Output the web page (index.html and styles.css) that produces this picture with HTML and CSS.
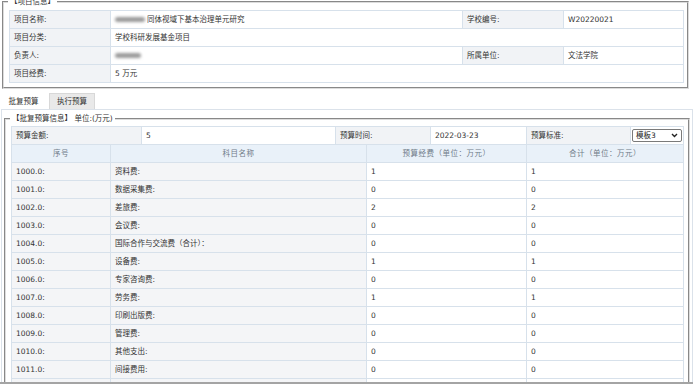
FILE: index.html
```html
<!DOCTYPE html>
<html lang="zh-CN">
<head>
    <meta charset="UTF-8">
    <meta name="viewport" content="width=device-width, initial-scale=1.0">
    <title>项目预算</title>
    <link rel="stylesheet" href="styles.css">
</head>
<body>
    <div class="page">
        <fieldset class="box info">
            <legend>【项目信息】</legend>
            <table class="grid">
                <colgroup>
                    <col style="width:101px">
                    <col style="width:352px">
                    <col style="width:101px">
                    <col style="width:120px">
                </colgroup>
                <tr>
                    <td class="lbl">项目名称:</td>
                    <td><span class="blur wide"></span>同体视域下基本治理单元研究</td>
                    <td class="lbl">学校编号:</td>
                    <td>W20220021</td>
                </tr>
                <tr>
                    <td class="lbl">项目分类:</td>
                    <td colspan="3">学校科研发展基金项目</td>
                </tr>
                <tr>
                    <td class="lbl">负责人:</td>
                    <td><span class="blur"></span></td>
                    <td class="lbl">所属单位:</td>
                    <td>文法学院</td>
                </tr>
                <tr>
                    <td class="lbl">项目经费:</td>
                    <td colspan="3">5 万元</td>
                </tr>
            </table>
        </fieldset>

        <div class="tabs">
            <div class="tab active">批复预算</div>
            <div class="tab">执行预算</div>
        </div>

        <div class="panel">
            <fieldset class="box budget">
                <legend>【批复预算信息】 单位:(万元)</legend>
                <table class="grid">
                    <colgroup>
                        <col style="width:99px">
                        <col style="width:31px">
                        <col style="width:194px">
                        <col style="width:31px">
                        <col style="width:64px">
                        <col style="width:96px">
                        <col style="width:104px">
                        <col style="width:53px">
                    </colgroup>
                    <tr>
                        <td class="lbl" colspan="2">预算金额:</td>
                        <td>5</td>
                        <td class="lbl" colspan="2">预算时间:</td>
                        <td>2022-03-23</td>
                        <td class="lbl">预算标准:</td>
                        <td class="pick">
                            <div class="select">
                                <span>模板3</span>
                                <svg width="7" height="5" viewBox="0 0 7 5"><polyline points="1,1 3.5,3.5 6,1" fill="none" stroke="#222" stroke-width="1.4"/></svg>
                            </div>
                        </td>
                    </tr>
                    <tr class="head">
                        <td>序号</td>
                        <td colspan="3">科目名称</td>
                        <td colspan="2">预算经费（单位：万元）</td>
                        <td colspan="2">合计（单位：万元）</td>
                    </tr>
                    <tr><td class="key">1000.0:</td><td class="key" colspan="3">资料费:</td><td colspan="2">1</td><td colspan="2">1</td></tr>
                    <tr><td class="key">1001.0:</td><td class="key" colspan="3">数据采集费:</td><td colspan="2">0</td><td colspan="2">0</td></tr>
                    <tr><td class="key">1002.0:</td><td class="key" colspan="3">差旅费:</td><td colspan="2">2</td><td colspan="2">2</td></tr>
                    <tr><td class="key">1003.0:</td><td class="key" colspan="3">会议费:</td><td colspan="2">0</td><td colspan="2">0</td></tr>
                    <tr><td class="key">1004.0:</td><td class="key" colspan="3">国际合作与交流费（合计）：</td><td colspan="2">0</td><td colspan="2">0</td></tr>
                    <tr><td class="key">1005.0:</td><td class="key" colspan="3">设备费:</td><td colspan="2">1</td><td colspan="2">1</td></tr>
                    <tr><td class="key">1006.0:</td><td class="key" colspan="3">专家咨询费:</td><td colspan="2">0</td><td colspan="2">0</td></tr>
                    <tr><td class="key">1007.0:</td><td class="key" colspan="3">劳务费:</td><td colspan="2">1</td><td colspan="2">1</td></tr>
                    <tr><td class="key">1008.0:</td><td class="key" colspan="3">印刷出版费:</td><td colspan="2">0</td><td colspan="2">0</td></tr>
                    <tr><td class="key">1009.0:</td><td class="key" colspan="3">管理费:</td><td colspan="2">0</td><td colspan="2">0</td></tr>
                    <tr><td class="key">1010.0:</td><td class="key" colspan="3">其他支出:</td><td colspan="2">0</td><td colspan="2">0</td></tr>
                    <tr><td class="key">1011.0:</td><td class="key" colspan="3">间接费用:</td><td colspan="2">0</td><td colspan="2">0</td></tr>
                    <tr><td class="key"></td><td class="key" colspan="3"></td><td colspan="2"></td><td colspan="2"></td></tr>
                </table>
            </fieldset>
        </div>
    </div>
</body>
</html>
```

FILE: styles.css
```css
body {
    margin: 0;
    font-family: "DejaVu Sans", "Noto Sans CJK SC", sans-serif;
    font-size: 7.5px;
    color: #333;
    background: #fff;
}

/* page is scrolled a little, legend of the first box is cut */
.page {
    height: 382px;
    overflow: hidden;
    border-bottom: 2px solid #a4a4a4;
}

.box {
    margin: 0;
    padding: 0 4px 4px 5px;
    border: 2px groove #dcdcdc;
    min-inline-size: 0;
}
.box legend {
    padding: 0 2px;
    margin-left: -1px;
    line-height: 10px;
    color: #333;
}
.info {
    margin: -3px 4px 0 2px;
}
.info .grid {
    margin-top: 3px;
}

.grid {
    border-collapse: collapse;
    table-layout: fixed;
    width: 100%;
}
.grid td {
    height: 17px;
    padding: 0 4px;
    line-height: 17px;
    border: 1px solid #d7e1eb;
    white-space: nowrap;
    overflow: hidden;
    background: #fff;
}
.grid td.lbl {
    background: #f1f3f6;
}
.grid td.key {
    background: #f4f5f7;
}
.grid .head td {
    background: #e9f1f9;
    color: #6f7b88;
    text-align: center;
    letter-spacing: 0.5px;
}

.blur {
    display: inline-block;
    width: 26px;
    height: 5px;
    margin-right: 2px;
    vertical-align: middle;
    background: #9a9a9a;
    border-radius: 3px;
    filter: blur(1.6px);
}
.blur.wide {
    width: 30px;
}

.tabs {
    display: flex;
    gap: 2px;
    margin-top: 4px;
    height: 16px;
}
.tab {
    width: 46px;
    line-height: 16px;
    text-align: center;
    background: #e9e9e9;
    border: 1px solid #d8d8d8;
    border-bottom: none;
    box-sizing: border-box;
    color: #333;
}
.tab.active {
    width: 47px;
    background: #fff;
    border-color: #fff;
}

.panel {
    margin-left: 1px;
    border: 1px solid #dbe2ea;
    padding: 4px 2px 0 2px;
}
.budget {
    padding: 2px 5px 0 5px;
}

.pick {
    padding: 0 1px !important;
}
.select {
    display: flex;
    align-items: center;
    justify-content: space-between;
    height: 11px;
    padding: 0 3px;
    border: 1px solid #7a7a7a;
    border-radius: 2px;
    background: #fff;
    line-height: 11px;
    color: #222;
}
```
